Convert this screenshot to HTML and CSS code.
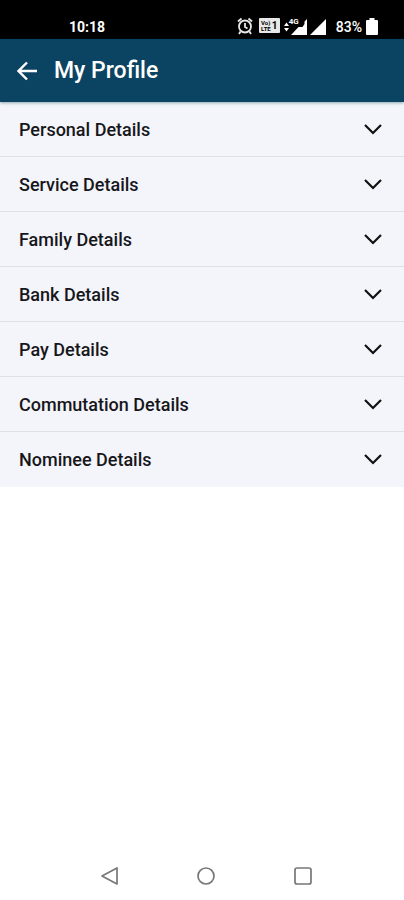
FILE: index.html
```html
<!DOCTYPE html>
<html lang="en">
<head>
<meta charset="utf-8">
<meta name="viewport" content="width=device-width, initial-scale=1">
<title>My Profile</title>
<link rel="stylesheet" href="styles.css">
</head>
<body>
<div class="status">
  <span class="time">10:18</span>
  <div class="indicators">
    <svg class="alarm" width="16" height="18" viewBox="0 0 16 18" fill="none" stroke="#e8e8e8" stroke-width="1.8"><circle cx="8" cy="9.500" r="6"/><path d="M1 4.500 4.500 1.500M15 4.500 11.500 1.500M3.500 14.500 2 17M12.500 14.500 14 17M8 6v4l2.500 1.500"/></svg>
    <span class="volte"><span class="volte-text"><span>Vo)</span><span>LTE</span></span><span>1</span></span>
    <span class="signal">
      <svg width="23" height="17" viewBox="0 0 23 17" fill="#fff"><path d="M0 8 2.500 4.500 5 8zM0 10h5l-2.500 3.500zM23 1v16H7l7.500-8h4l2-3V3.500z"/></svg>
      <span class="network">4G</span>
    </span>
    <svg class="signal-two" width="16" height="17" viewBox="0 0 16 17" fill="#fff"><path d="M16 1v16H0z"/></svg>
    <span class="percent">83%</span>
    <svg width="12" height="17" viewBox="0 0 12 17" fill="#fff"><path d="M3.500 0h5v2H11q1 0 1 1v13q0 1-1 1H1q-1 0-1-1V3q0-1 1-1h2.500z"/></svg>
  </div>
</div>
<header class="appbar">
  <button class="back" type="button" aria-label="Back"><svg width="20" height="20" viewBox="0 0 20 20" fill="none" stroke="#fff" stroke-width="2.4"><path d="M20 10H2M10 1.500 1.500 10l8.500 8.500"/></svg></button>
  <h1>My Profile</h1>
</header>
<main>
  <div class="sections">
    <button class="row" type="button" aria-expanded="false">Personal Details<svg class="chevron" viewBox="0 0 18 11"><path d="M1 1l8 8L17 1"/></svg></button>
    <button class="row" type="button" aria-expanded="false">Service Details<svg class="chevron" viewBox="0 0 18 11"><path d="M1 1l8 8L17 1"/></svg></button>
    <button class="row" type="button" aria-expanded="false">Family Details<svg class="chevron" viewBox="0 0 18 11"><path d="M1 1l8 8L17 1"/></svg></button>
    <button class="row" type="button" aria-expanded="false">Bank Details<svg class="chevron" viewBox="0 0 18 11"><path d="M1 1l8 8L17 1"/></svg></button>
    <button class="row" type="button" aria-expanded="false">Pay Details<svg class="chevron" viewBox="0 0 18 11"><path d="M1 1l8 8L17 1"/></svg></button>
    <button class="row" type="button" aria-expanded="false">Commutation Details<svg class="chevron" viewBox="0 0 18 11"><path d="M1 1l8 8L17 1"/></svg></button>
    <button class="row" type="button" aria-expanded="false">Nominee Details<svg class="chevron" viewBox="0 0 18 11"><path d="M1 1l8 8L17 1"/></svg></button>
  </div>
</main>
<nav class="system">
  <button type="button" aria-label="Back"><svg viewBox="0 0 20 20"><path d="M18 2v16L3 10z"/></svg></button>
  <button type="button" aria-label="Home"><svg viewBox="0 0 20 20"><circle cx="10" cy="10" r="8"/></svg></button>
  <button type="button" aria-label="Recent apps"><svg viewBox="0 0 20 20"><rect x="2" y="2" width="16" height="16" rx="2"/></svg></button>
</nav>
</body>
</html>
```
FILE: styles.css
```css
* { box-sizing: border-box; }

body {
  margin: 0;
  min-height: 100vh;
  display: flex;
  flex-direction: column;
  background: #fff;
  font-family: Roboto, "Liberation Sans", sans-serif;
}

button {
  border: 0;
  padding: 0;
  background: none;
  font: inherit;
  color: inherit;
  cursor: pointer;
}

svg { display: block; flex: none; }

.status {
  display: flex;
  align-items: flex-end;
  justify-content: space-between;
  height: 39px;
  padding: 0 26px 4px 69px;
  background: #000;
  color: #fff;
  font-size: 14px;
  line-height: 16px;
  font-weight: 700;
}

.indicators { display: flex; align-items: flex-end; }

.volte {
  display: flex;
  align-items: center;
  justify-content: center;
  gap: 1px;
  width: 21px;
  height: 15px;
  margin: 0 4px 2px 6px;
  border-radius: 1px;
  background: #e8e8e8;
  color: #000;
  font-size: 10px;
}

.volte-text {
  display: flex;
  flex-direction: column;
  font-size: 6px;
  line-height: 6px;
}

.signal { position: relative; }

.network {
  position: absolute;
  top: 0;
  left: 5px;
  font-size: 8px;
  line-height: 8px;
}

.signal-two { margin: 0 10px 0 3px; }

.percent { margin-right: 4px; font-weight: 500; }

.appbar {
  position: relative;
  display: flex;
  align-items: center;
  gap: 17px;
  height: 63px;
  padding: 0 17px;
  background: #0b4462;
  box-shadow: 0 1px 3px #0b446270;
  color: #fff;
}

h1 {
  margin: 0;
  font-size: 23px;
  line-height: 30px;
  font-weight: 500;
}

main { flex: 1; }

.sections { background: #f4f5fa; }

.row {
  display: flex;
  align-items: center;
  justify-content: space-between;
  width: 100%;
  height: 55px;
  padding: 1px 22px 0 19px;
  border-bottom: 1px solid #dfe0e5;
  color: #17171b;
  font-size: 18px;
  line-height: 24px;
  font-weight: 500;
}

.row:last-child { border-color: transparent; }

.chevron {
  width: 18px;
  height: 11px;
  fill: none;
  stroke: #111;
  stroke-width: 2.2;
}

.system {
  display: flex;
  justify-content: center;
  gap: 77px;
  padding: 0 0 14px 7px;
}

.system svg {
  width: 20px;
  height: 20px;
  fill: none;
  stroke: #777;
  stroke-width: 1.7;
  stroke-linejoin: round;
}
```
